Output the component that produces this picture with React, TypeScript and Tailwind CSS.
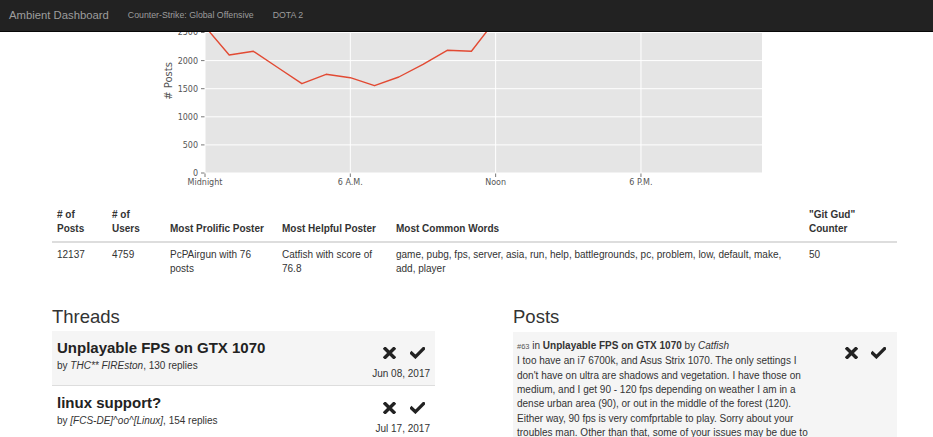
import React from "react";

const LINE = "#E24A33";

function XIcon() {
  return (
    <svg width="13" height="12" viewBox="0 0 13 12" className="block">
      <path d="M2.2 1.7 L10.8 10.3 M10.8 1.7 L2.2 10.3" stroke="#222" strokeWidth="3.4" strokeLinecap="square" fill="none" />
    </svg>
  );
}

function CheckIcon() {
  return (
    <svg width="15" height="12" viewBox="0 0 15 12" className="block">
      <path d="M1.6 6.2 L5.4 9.8 L13.6 1.6" stroke="#222" strokeWidth="3.3" strokeLinecap="square" strokeLinejoin="miter" fill="none" />
    </svg>
  );
}

function Chart() {
  const y = (v: number) => 173 - v * 0.0562;
  const x = (h: number) => 205 + h * 24.22;
  const vals: [number, number][] = [
    [0, 26.5],
    [1, 55],
    [2, 51.3],
    [3, 67.5],
    [4, 83.7],
    [5, 74.3],
    [6, 77.7],
    [7, 85.7],
    [8, 77],
    [9, 64.3],
    [10, 50.3],
    [11, 51.3],
    [12, 20],
    [13, 5],
  ];
  const pts = vals.map(([h, yy]) => `${x(h).toFixed(1)},${yy}`).join(" ");
  const yt = [0, 500, 1000, 1500, 2000, 2500];
  const xt: [number, string][] = [
    [0, "Midnight"],
    [6, "6 A.M."],
    [12, "Noon"],
    [18, "6 P.M."],
  ];
  return (
    <svg width="620" height="160" viewBox="150 32 620 160" className="block">
      <rect x="205" y="0" width="557" height="173" fill="#E5E5E5" />
      {yt.map((v) => (
        <line key={v} x1="205" x2="762" y1={y(v)} y2={y(v)} stroke="#fff" strokeWidth="1" />
      ))}
      {xt.map(([h]) => (
        <line key={h} x1={x(h)} x2={x(h)} y1="0" y2="173" stroke="#fff" strokeWidth="1" />
      ))}
      <polyline points={pts} fill="none" stroke={LINE} strokeWidth="1.4" strokeLinejoin="round" />
      {yt.map((v) => (
        <g key={v}>
          <line x1="201" x2="204.5" y1={y(v)} y2={y(v)} stroke="#555" strokeWidth="0.8" />
          <text
            x="198"
            y={y(v) + 2.9}
            textAnchor="end"
            fontSize="8"
            fill="#555"
            fontFamily="'DejaVu Sans', sans-serif"
          >
            {v}
          </text>
        </g>
      ))}
      {xt.map(([h, l]) => (
        <g key={h}>
          <line x1={x(h)} x2={x(h)} y1="173.5" y2="177" stroke="#555" strokeWidth="0.8" />
          <text
            x={x(h)}
            y="185"
            textAnchor="middle"
            fontSize="8"
            fill="#555"
            fontFamily="'DejaVu Sans', sans-serif"
          >
            {l}
          </text>
        </g>
      ))}
      <text
        x="0"
        y="0"
        transform="translate(171.5 81) rotate(-90)"
        textAnchor="middle"
        fontSize="10"
        fill="#555"
        fontFamily="'DejaVu Sans', sans-serif"
      >
        # Posts
      </text>
    </svg>
  );
}

function ThreadItem({
  title,
  by,
  replies,
  date,
  shaded,
}: {
  title: string;
  by: string;
  replies: number;
  date: string;
  shaded?: boolean;
}) {
  return (
    <div
      className={
        "flex justify-between border-b border-[#ddd] px-[5px] pt-[8px] pb-[4px] " +
        (shaded ? "bg-[#f5f5f5]" : "bg-white")
      }
    >
      <div>
        <div className="text-[15px] font-bold leading-[17px] text-[#222]">{title}</div>
        <div className="mt-[3px] text-[10px] leading-[14.3px]">
          by <i>{by}</i>, {replies} replies
        </div>
      </div>
      <div className="flex flex-col items-end">
        <div className="mt-[8px] flex items-center gap-[14px] pr-[5px]">
          <XIcon />
          <CheckIcon />
        </div>
        <div className="mt-[8px] text-[10px] leading-[14.3px]">{date}</div>
      </div>
    </div>
  );
}

export default function App() {
  const th = "px-[5px] pt-[7px] pb-[4px] align-bottom text-left font-bold";
  const td = "px-[5px] pt-[5px] pb-[5px] align-top";
  return (
    <div
      className="min-h-screen bg-white text-[#333]"
      style={{ fontFamily: "'Liberation Sans', Arial, sans-serif" }}
    >
      <div className="flex h-[32px] items-center gap-[19px] border-b border-[#080808] bg-[#222] pl-[9px]">
        <span className="text-[11.3px] text-[#9d9d9d]">Ambient Dashboard</span>
        <span className="text-[8.75px] text-[#9d9d9d]">Counter-Strike: Global Offensive</span>
        <span className="text-[8.75px] text-[#9d9d9d]">DOTA 2</span>
      </div>

      <div className="pl-[150px]">
        <Chart />
      </div>

      <div className="ml-[52px] w-[845px]">
        <table className="mt-[9px] w-[845px] table-fixed border-collapse text-[10px] leading-[14.3px]">
          <colgroup>
            <col className="w-[55px]" />
            <col className="w-[58px]" />
            <col className="w-[112px]" />
            <col className="w-[114px]" />
            <col className="w-[413px]" />
            <col className="w-[93px]" />
          </colgroup>
          <thead>
            <tr className="border-b-2 border-[#ddd]">
              <th className={th}># of Posts</th>
              <th className={th}># of Users</th>
              <th className={th}>Most Prolific Poster</th>
              <th className={th}>Most Helpful Poster</th>
              <th className={th}>Most Common Words</th>
              <th className={th}>"Git Gud" Counter</th>
            </tr>
          </thead>
          <tbody>
            <tr>
              <td className={td}>12137</td>
              <td className={td}>4759</td>
              <td className={td}>PcPAirgun with 76 posts</td>
              <td className={td}>Catfish with score of 76.8</td>
              <td className={td}>
                game, pubg, fps, server, asia, run, help, battlegrounds, pc, problem, low, default, make, add, player
              </td>
              <td className={td}>50</td>
            </tr>
          </tbody>
        </table>

        <div className="mt-[26px] flex justify-between">
          <div className="w-[383px]">
            <h3 className="text-[18.5px] font-normal leading-[20px] text-[#333]">Threads</h3>
            <div className="mt-[4px]">
              <ThreadItem title="Unplayable FPS on GTX 1070" by="THC** FIREston" replies={130} date="Jun 08, 2017" shaded />
              <ThreadItem title="linux support?" by="[FCS-DE]^oo^[Linux]" replies={154} date="Jul 17, 2017" />
            </div>
          </div>
          <div className="w-[384px]">
            <h3 className="text-[18.5px] font-normal leading-[20px] text-[#333]">Posts</h3>
            <div className="mt-[5px] flex justify-between bg-[#f5f5f5] pl-[4px] pt-[7px] pb-[6px]">
              <div className="w-[292px] text-[10px] leading-[14.3px]">
                <div>
                  <span className="text-[7.5px] text-[#555]">#63</span> in{" "}
                  <b>Unplayable FPS on GTX 1070</b> by <i>Catfish</i>
                </div>
                <div>
                  I too have an i7 6700k, and Asus Strix 1070. The only settings I don't have on ultra are shadows and
                  vegetation. I have those on medium, and I get 90 - 120 fps depending on weather I am in a dense urban
                  area (90), or out in the middle of the forest (120). Either way, 90 fps is very comfprtable to play.
                  Sorry about your troubles man. Other than that, some of your issues may be due to your drivers or
                  background programs, so try a clean install.
                </div>
              </div>
              <div className="mt-[8px] flex items-start gap-[13px] pr-[11px]">
                <XIcon />
                <CheckIcon />
              </div>
            </div>
          </div>
        </div>
      </div>
    </div>
  );
}
